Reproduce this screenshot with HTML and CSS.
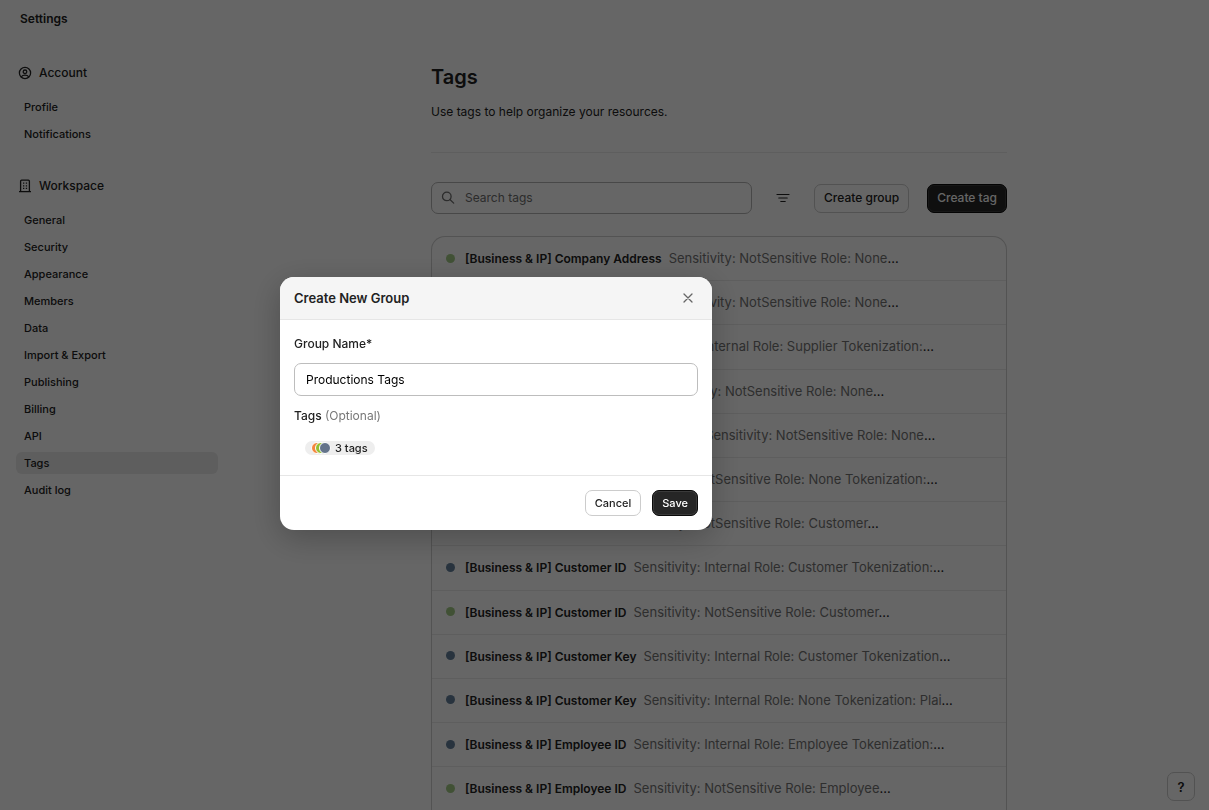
FILE: index.html
```html
<!DOCTYPE html>
<html lang="en">
<head>
<meta charset="utf-8">
<meta name="viewport" content="width=device-width, initial-scale=1">
<title>Settings – Tags</title>
<link rel="stylesheet" href="styles.css">
</head>
<body>
<div class="app">
  <nav class="sidebar" aria-label="Settings">
    <h2 class="sidebar-title">Settings</h2>
    <h3 class="section-title">
      <svg class="section-icon" viewBox="0 0 14 14" fill="none" stroke="currentColor" stroke-width="1.3"><circle cx="7" cy="7" r="5.6"/><circle cx="7" cy="5.8" r="1.8"/><path d="M3.2 10.9C4 9.8 5.3 9.2 7 9.2s3 .6 3.8 1.7"/></svg>
      Account
    </h3>
    <ul class="nav-list">
      <li><a class="nav-link" href="#">Profile</a></li>
      <li><a class="nav-link" href="#">Notifications</a></li>
    </ul>
    <h3 class="section-title">
      <svg class="section-icon" viewBox="0 0 14 14" fill="none" stroke="currentColor" stroke-width="1.3"><path d="M1 12.6h12M2.6 12.6V2.2q0-1 1-1h6.8q1 0 1 1v10.4"/><path d="M5 4.2h1.3M7.8 4.2h1.3M5 6.8h1.3M7.8 6.8h1.3M5 9.4h1.3M7.8 9.4h1.3"/></svg>
      Workspace
    </h3>
    <ul class="nav-list">
      <li><a class="nav-link" href="#">General</a></li>
      <li><a class="nav-link" href="#">Security</a></li>
      <li><a class="nav-link" href="#">Appearance</a></li>
      <li><a class="nav-link" href="#">Members</a></li>
      <li><a class="nav-link" href="#">Data</a></li>
      <li><a class="nav-link" href="#">Import &amp; Export</a></li>
      <li><a class="nav-link" href="#">Publishing</a></li>
      <li><a class="nav-link" href="#">Billing</a></li>
      <li><a class="nav-link" href="#">API</a></li>
      <li><a class="nav-link is-active" href="#" aria-current="page">Tags</a></li>
      <li><a class="nav-link" href="#">Audit log</a></li>
    </ul>
  </nav>
  <main class="main">
    <div class="content">
      <header class="page-head">
        <h1 class="page-title">Tags</h1>
        <p class="page-lead">Use tags to help organize your resources.</p>
      </header>
      <div class="toolbar">
        <label class="search">
          <svg class="search-icon" viewBox="0 0 14 14" fill="none" stroke="currentColor" stroke-width="1.3" stroke-linecap="round"><circle cx="5.8" cy="5.4" r="4.3"/><path d="M8.9 8.5l3.8 3.6"/></svg>
          <input class="search-input" type="text" placeholder="Search tags" aria-label="Search tags">
        </label>
        <button class="filter" type="button" aria-label="Filter">
          <svg class="filter-icon" viewBox="0 0 14 10" fill="none" stroke="currentColor" stroke-width="1.2" stroke-linecap="round"><path d="M1 1.5h12M2.8 5h8.4M4.8 8.5h4.4"/></svg>
        </button>
        <button class="btn" type="button">Create group</button>
        <button class="btn btn-dark" type="button">Create tag</button>
      </div>
      <ul class="tags">
        <li class="tag"><i class="dot green"></i><b class="name">[Business &amp; IP] Company Address</b><span class="desc">Sensitivity: NotSensitive Role: None<span class="more">…</span></span></li>
        <li class="tag"><i class="dot blue"></i><b class="name">[Business &amp; IP] Company Address</b><span class="desc">Sensitivity: NotSensitive Role: None<span class="more">…</span></span></li>
        <li class="tag"><i class="dot blue"></i><b class="name">[Business &amp; IP] Company ID</b><span class="desc">Sensitivity: Internal Role: Supplier Tokenization:<span class="more">…</span></span></li>
        <li class="tag"><i class="dot green"></i><b class="name">[Business &amp; IP] Company Name</b><span class="desc">Sensitivity: NotSensitive Role: None<span class="more">…</span></span></li>
        <li class="tag"><i class="dot green"></i><b class="name">[Business &amp; IP] Company Registration ID</b><span class="desc">Sensitivity: NotSensitive Role: None<span class="more">…</span></span></li>
        <li class="tag"><i class="dot green"></i><b class="name">[Business &amp; IP] Contact ID</b><span class="desc">Sensitivity: NotSensitive Role: None Tokenization:<span class="more">…</span></span></li>
        <li class="tag"><i class="dot green"></i><b class="name">[Business &amp; IP] Contact ID</b><span class="desc">Sensitivity: NotSensitive Role: Customer<span class="more">…</span></span></li>
        <li class="tag"><i class="dot blue"></i><b class="name">[Business &amp; IP] Customer ID</b><span class="desc">Sensitivity: Internal Role: Customer Tokenization:<span class="more">…</span></span></li>
        <li class="tag"><i class="dot green"></i><b class="name">[Business &amp; IP] Customer ID</b><span class="desc">Sensitivity: NotSensitive Role: Customer<span class="more">…</span></span></li>
        <li class="tag"><i class="dot blue"></i><b class="name">[Business &amp; IP] Customer Key</b><span class="desc">Sensitivity: Internal Role: Customer Tokenization<span class="more">…</span></span></li>
        <li class="tag"><i class="dot blue"></i><b class="name">[Business &amp; IP] Customer Key</b><span class="desc">Sensitivity: Internal Role: None Tokenization: Plai<span class="more">…</span></span></li>
        <li class="tag"><i class="dot blue"></i><b class="name">[Business &amp; IP] Employee ID</b><span class="desc">Sensitivity: Internal Role: Employee Tokenization:<span class="more">…</span></span></li>
        <li class="tag"><i class="dot green"></i><b class="name">[Business &amp; IP] Employee ID</b><span class="desc">Sensitivity: NotSensitive Role: Employee<span class="more">…</span></span></li>
      </ul>
    </div>
  </main>
  <button class="help" type="button" aria-label="Help">?</button>
</div>
<div class="overlay">
  <form class="modal" role="dialog" aria-modal="true" aria-labelledby="modal-title">
    <header class="modal-head">
      <h2 class="modal-title" id="modal-title">Create New Group</h2>
      <button class="close" type="button" aria-label="Close">
        <svg class="close-icon" viewBox="0 0 10 10" fill="none" stroke="currentColor" stroke-width="1.3" stroke-linecap="round"><path d="M1 1l8 8M9 1L1 9"/></svg>
      </button>
    </header>
    <div class="modal-body">
      <label class="label" for="group-name">Group Name*</label>
      <input class="field" id="group-name" type="text" value="Productions Tags">
      <p class="label">Tags <span class="optional">(Optional)</span></p>
      <button class="chip" type="button"><span class="stack"><i class="pip orange"></i><i class="pip lime"></i><i class="pip slate"></i></span>3 tags</button>
    </div>
    <footer class="modal-foot">
      <button class="btn btn-small" type="button">Cancel</button>
      <button class="btn btn-small btn-dark" type="submit">Save</button>
    </footer>
  </form>
</div>
</body>
</html>
```
FILE: styles.css
```css
* { box-sizing: border-box; }
body, h1, h2, h3, p, ul { margin: 0; padding: 0; }
body {
  font-family: Inter, "Liberation Sans", sans-serif;
  font-size: 12px;
  line-height: 16px;
  color: #222;
  background: #fff;
}
ul { list-style: none; }
button, input { font: inherit; color: inherit; margin: 0; }
svg { display: block; flex: none; }

.app { display: flex; height: 100vh; overflow: hidden; }
.sidebar { flex: none; width: 229px; padding: 11px 11px 0 16px; }
.sidebar-title { padding-left: 4px; margin-bottom: 38px; font-size: 12px; font-weight: 600; }
.section-title {
  display: flex;
  align-items: center;
  gap: 7px;
  padding-left: 2px;
  margin-bottom: 15px;
  font-size: 12px;
  font-weight: 500;
}
.section-icon { width: 14px; height: 14px; }
.nav-list { display: grid; gap: 5px; margin-bottom: 33px; }
.nav-link {
  display: block;
  padding: 3px 8px;
  border-radius: 6px;
  font-size: 11px;
  font-weight: 500;
  color: inherit;
  text-decoration: none;
}
.nav-link.is-active { background: #ebebeb; }

.main { flex: 1; min-width: 0; padding: 64px 24px 0; }
.content { max-width: 576px; margin: 0 auto; }
.page-head { padding-bottom: 32px; border-bottom: 1px solid #ebebeb; }
.page-title { margin-bottom: 14px; font-size: 20px; line-height: 26px; font-weight: 600; }
.toolbar { display: flex; align-items: center; margin: 29px 0 22px; gap: 18px; }
.search {
  flex: 1;
  display: flex;
  align-items: center;
  gap: 10px;
  height: 32px;
  padding: 0 9px;
  border: 1px solid #b4b4b4;
  border-radius: 7px;
  color: #6e6e6e;
}
.search-icon { width: 14px; height: 14px; }
.search-input { flex: 1; min-width: 0; padding: 0; border: 0; background: none; outline: 0; }
.search-input::placeholder { color: #6e6e6e; opacity: 1; }
.filter { display: flex; padding: 10px 6px; border: 0; background: none; }
.filter-icon { width: 14px; height: 10px; }
.btn {
  height: 29px;
  padding: 0 9px;
  border: 1px solid #ccc;
  border-radius: 7px;
  background: #fff;
  font-weight: 500;
}
.btn-dark {
  border-color: #0a0a0a;
  background: #262626;
  box-shadow: inset 0 0 0 1px #3a3a3a;
  color: #fff;
}
.btn-small { height: 26px; font-size: 11px; }

.tags { border: 1px solid #cfcfcf; border-bottom: 0; border-radius: 14px 14px 0 0; }
.tag {
  display: flex;
  align-items: baseline;
  padding: 12px 14px 13px;
  border-bottom: 1px solid #ebebeb;
  font-size: 13px;
  line-height: 1.4;
  white-space: nowrap;
}
.dot { flex: none; align-self: center; width: 9px; height: 9px; margin-right: 10px; border-radius: 50%; }
.green { background: #a3cb86; }
.blue { background: #64809c; }
.name { margin-right: 7px; font-size: 12px; line-height: 1; font-weight: 600; }
.desc { color: #747474; }
.more { color: #222; }
.help {
  position: fixed;
  right: 14px;
  bottom: 9px;
  width: 28px;
  height: 29px;
  padding: 0;
  border: 1px solid #ccc;
  border-radius: 7px;
  background: #fff;
  font-size: 13px;
  font-weight: 600;
}

.overlay { position: fixed; inset: 0; background: rgba(0, 0, 0, .6); }
.modal {
  position: absolute;
  left: 280px;
  top: 277px;
  width: 432px;
  border-radius: 14px;
  background: #fff;
  box-shadow: 0 8px 32px rgba(0, 0, 0, .25);
  overflow: hidden;
}
.modal-head {
  display: flex;
  align-items: center;
  justify-content: space-between;
  height: 43px;
  padding: 0 14px;
  border-bottom: 1px solid #e6e6e6;
  background: #f5f5f5;
}
.modal-title { font-size: 13px; font-weight: 600; }
.close { padding: 5px; border: 0; background: none; color: #666; }
.close-icon { width: 10px; height: 10px; }
.modal-body { display: flex; flex-direction: column; align-items: flex-start; padding: 16px 14px 20px; }
.label { font-weight: 500; }
.optional { color: #777; font-weight: 400; }
.field {
  width: 100%;
  height: 33px;
  margin: 11px 0 12px;
  padding: 0 11px;
  border: 1px solid #bdbdbd;
  border-radius: 7px;
  color: #000;
}
.chip {
  display: flex;
  align-items: center;
  gap: 4px;
  height: 14px;
  margin: 17px 0 0 11px;
  padding: 0 7px 0 6px;
  border: 0;
  border-radius: 7px;
  background: #eee;
  font-size: 11px;
  line-height: 14px;
  font-weight: 500;
}
.stack { display: flex; }
.pip { width: 12px; height: 12px; border: 1px solid #fff; border-radius: 50%; }
.pip + .pip { margin-left: -8px; }
.orange { background: #f5873d; }
.lime { background: #94bf2f; }
.slate { background: #64748b; }
.modal-foot {
  display: flex;
  justify-content: flex-end;
  gap: 11px;
  padding: 14px;
  border-top: 1px solid #e6e6e6;
}
```
